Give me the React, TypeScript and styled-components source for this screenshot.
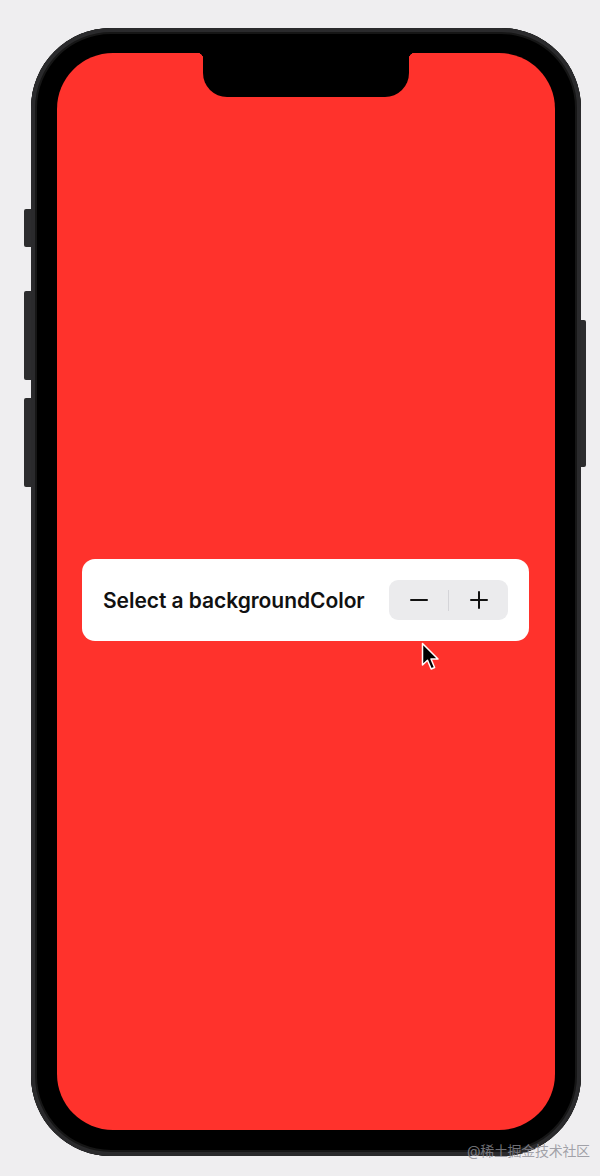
import styled, { createGlobalStyle } from "styled-components";

const GlobalStyle = createGlobalStyle`
  html, body {
    margin: 0;
    padding: 0;
    background: #efeef0;
  }
  body {
    font-family: "Inter", "Noto Sans", "Noto Sans CJK SC", sans-serif;
  }
`;

const Page = styled.div`
  position: relative;
  width: 600px;
  height: 1176px;
  padding: 28px 0 0 31px;
  box-sizing: border-box;
  overflow: hidden;
`;

const Phone = styled.div`
  position: relative;
  width: 550px;
  height: 1128px;
  box-sizing: border-box;
  padding: 25px 26px 26px 26px;
  border-radius: 80px;
  background: #000;
  box-shadow: inset 0 0 0 4px #2a2a2c, inset 0 0 0 6px #161616;
`;

const SideButton = styled.div<{ $side: "left" | "right"; $top: number; $h: number }>`
  position: absolute;
  top: ${(p) => p.$top}px;
  ${(p) => (p.$side === "left" ? "left: -7px;" : "right: -5px;")}
  width: ${(p) => (p.$side === "left" ? 7 : 5)}px;
  height: ${(p) => p.$h}px;
  background: #2c2c2e;
  border-radius: ${(p) => (p.$side === "left" ? "2px 0 0 2px" : "0 2px 2px 0")};
`;

const Screen = styled.div`
  position: relative;
  height: 100%;
  border-radius: 56px;
  background: #ff322c;
  display: flex;
  flex-direction: column;
  justify-content: center;
  align-items: stretch;
  padding: 17px 26px 0 25px;
  box-sizing: border-box;
  overflow: hidden;
`;

const Notch = styled.div`
  position: absolute;
  top: 0;
  left: 50%;
  transform: translateX(-50%);
  width: 206px;
  height: 44px;
  background: #000;
  border-radius: 0 0 24px 24px;

  &::before,
  &::after {
    content: "";
    position: absolute;
    top: 0;
    width: 6px;
    height: 6px;
  }
  &::before {
    left: -6px;
    background: radial-gradient(circle at 0 100%, transparent 6px, #000 6.5px);
  }
  &::after {
    right: -6px;
    background: radial-gradient(circle at 100% 100%, transparent 6px, #000 6.5px);
  }
`;

const Card = styled.div`
  position: relative;
  height: 82px;
  background: #fff;
  border-radius: 13px;
  display: flex;
  align-items: center;
  justify-content: space-between;
  padding: 0 21px;
`;

const Label = styled.span`
  font-size: 21px;
  font-weight: 600;
  color: #111;
  letter-spacing: -0.05px;
`;

const Stepper = styled.div`
  display: flex;
  align-items: center;
  width: 119px;
  height: 40px;
  border-radius: 9px;
  background: #ebebed;
`;

const StepButton = styled.button`
  flex: 1;
  height: 100%;
  border: none;
  background: transparent;
  display: flex;
  align-items: center;
  justify-content: center;
  padding: 0;
  cursor: pointer;
`;

const Divider = styled.div`
  width: 1px;
  height: 21px;
  background: #d4d4d8;
`;

const Cursor = styled.svg`
  position: absolute;
  left: 339px;
  top: 83px;
`;

const Watermark = styled.div`
  position: absolute;
  left: 467px;
  top: 1140px;
  font-size: 14px;
  color: rgba(140, 140, 148, 0.8);
  letter-spacing: -0.3px;
  white-space: nowrap;
`;

export default function App() {
  return (
    <>
      <GlobalStyle />
      <Page>
        <Phone>
          <SideButton $side="left" $top={181} $h={38} />
          <SideButton $side="left" $top={263} $h={89} />
          <SideButton $side="left" $top={370} $h={89} />
          <SideButton $side="right" $top={292} $h={147} />
          <Screen>
            <Notch />
            <Card>
              <Label>Select a backgroundColor</Label>
              <Stepper>
                <StepButton aria-label="decrement">
                  <svg width="18" height="18" viewBox="0 0 18 18">
                    <path d="M1 9h16" stroke="#111" strokeWidth="2" strokeLinecap="round" />
                  </svg>
                </StepButton>
                <Divider />
                <StepButton aria-label="increment">
                  <svg width="18" height="18" viewBox="0 0 18 18">
                    <path d="M1 9h16M9 1v16" stroke="#111" strokeWidth="2" strokeLinecap="round" />
                  </svg>
                </StepButton>
              </Stepper>
              <Cursor width="22" height="30" viewBox="0 0 22 30">
                <path
                  d="M1.5 1.5 L1.5 23 L6.5 18.3 L10.2 27 L13.6 25.5 L10 17 L17 17 Z"
                  fill="#000"
                  stroke="#fff"
                  strokeWidth="1.5"
                  strokeLinejoin="round"
                />
              </Cursor>
            </Card>
          </Screen>
        </Phone>
        <Watermark>@稀土掘金技术社区</Watermark>
      </Page>
    </>
  );
}
